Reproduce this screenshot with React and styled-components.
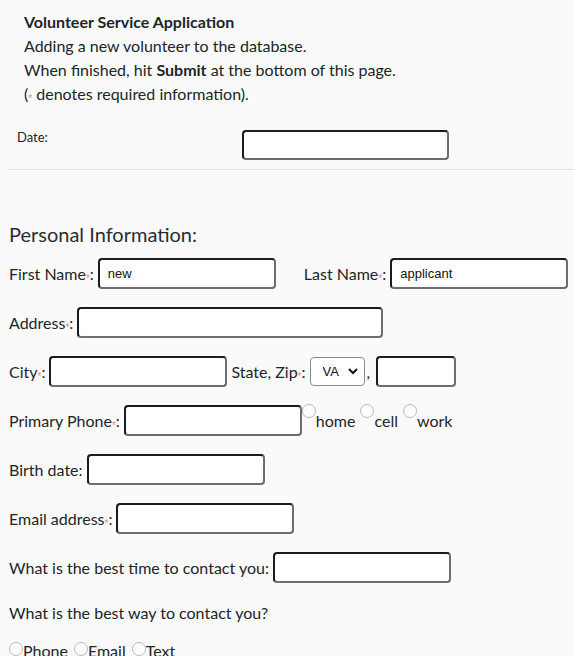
import React from "react";
import styled, { createGlobalStyle } from "styled-components";

const GlobalStyle = createGlobalStyle`
  body {
    margin: 0;
    background: #fafafa;
    font-family: Lato, "Segoe UI", "Liberation Sans", sans-serif;
    color: #212529;
  }
`;

const Page = styled.div`
  padding-left: 9px;
  height: 656px;
  overflow: hidden;
`;

const Intro = styled.div`
  margin-left: 15px;
  padding-top: 10px;
  font-size: 16px;
  line-height: 24px;
`;

const IntroTitle = styled.div`
  font-weight: 700;
`;

const DateRow = styled.div`
  display: grid;
  grid-template-columns: 225px 207px;
  align-items: start;
  margin: 24px 0 0 8px;
`;

const SmallLabel = styled.span`
  font-size: 13px;
  line-height: 14px;
`;

const Divider = styled.div`
  border-top: 1px solid #e2e2e2;
  margin-top: 9px;
`;

const SectionTitle = styled.h2`
  font-size: 20px;
  font-weight: 400;
  line-height: 28px;
  margin: 50px 0 10px;
  color: #2a2e33;
`;

const Form = styled.div`
  display: flex;
  flex-direction: column;
  gap: 18px;
`;

const Row = styled.div`
  display: flex;
  align-items: center;
  gap: 4px;
  height: 31px;
  font-size: 16px;
  line-height: 24px;
  white-space: nowrap;
`;

const Label = styled.span`
  margin-left: ${(p) => p.$ml || 0}px;
`;

const Req = styled.span`
  color: #e58a8a;
  font-family: "Liberation Sans", Arial, sans-serif;
  font-size: 10px;
  line-height: 0;
  vertical-align: -2px;
`;

const TextInput = styled.input`
  box-sizing: border-box;
  width: ${(p) => p.$w}px;
  height: ${(p) => p.$h || 31}px;
  border-style: solid;
  border-width: 2px;
  border-color: #1c1c1c #6e6e6e #6e6e6e #1c1c1c;
  border-radius: 4px;
  background: #fff;
  padding: 0 8px;
  font-family: "Segoe UI", "Liberation Sans", Arial, sans-serif;
  font-size: 13px;
  color: #111;
  outline: none;
`;

const SelectWrap = styled.span`
  position: relative;
  display: inline-flex;
`;

const Select = styled.select`
  appearance: none;
  box-sizing: border-box;
  width: 55px;
  height: 29px;
  border: 1px solid #8a8a8a;
  border-radius: 4px;
  background: #fff;
  padding: 0 0 0 12px;
  font-family: "Liberation Sans", Arial, sans-serif;
  font-size: 13px;
  color: #111;
`;

const Chevron = styled.svg`
  position: absolute;
  right: 7px;
  top: 11px;
  pointer-events: none;
`;

const Comma = styled.span`
  margin: 0 2px 0 -2px;
`;

const Options = styled.span`
  display: inline-flex;
  align-self: stretch;
  gap: 5px;
  margin-left: -4px;
`;

const Option = styled.span`
  display: inline-flex;
  align-items: ${(p) => (p.$top ? "flex-start" : "center")};
  line-height: ${(p) => (p.$top ? "31px" : "24px")};
`;

const Circle = styled.span`
  box-sizing: border-box;
  flex: none;
  width: 14px;
  height: 14px;
  border: 1px solid #b9b9b9;
  border-radius: 50%;
  background: #fff;
  margin-top: ${(p) => (p.$top ? "-1px" : "0")};
  margin-bottom: ${(p) => (p.$top ? "0" : "4px")};
`;

const Question = styled.div`
  font-size: 16px;
  line-height: 24px;
`;

const ContactWays = styled.div`
  display: flex;
  gap: 6px;
  margin-top: -4px;
  font-size: 16px;
  line-height: 24px;
`;

function Field({ children, required, ml }) {
  return (
    <Label $ml={ml}>
      {children}
      {required && <Req>*</Req>}:
    </Label>
  );
}

function Radio({ label, top }) {
  return (
    <Option $top={top}>
      <Circle $top={top} />
      {label}
    </Option>
  );
}

export default function App() {
  return (
    <Page>
      <GlobalStyle />
      <Intro>
        <IntroTitle>Volunteer Service Application</IntroTitle>
        <div>Adding a new volunteer to the database.</div>
        <div>
          When finished, hit <b>Submit</b> at the bottom of this page.
        </div>
        <div>
          (<Req>*</Req> denotes required information).
        </div>
      </Intro>

      <DateRow>
        <SmallLabel>Date:</SmallLabel>
        <TextInput $w={207} $h={30} />
      </DateRow>
      <Divider />

      <SectionTitle>Personal Information:</SectionTitle>
      <Form>
        <Row>
          <Field required>First Name</Field>
          <TextInput $w={178} defaultValue="new" />
          <Field required ml={24}>Last Name</Field>
          <TextInput $w={178} defaultValue="applicant" />
        </Row>
        <Row>
          <Field required>Address</Field>
          <TextInput $w={306} />
        </Row>
        <Row>
          <Field required>City</Field>
          <TextInput $w={178} />
          <Field required>State, Zip</Field>
          <SelectWrap>
            <Select defaultValue="VA">
              <option value="VA">VA</option>
            </Select>
            <Chevron width="10" height="7" viewBox="0 0 10 7">
              <path d="M1 1l4 4 4-4" fill="none" stroke="#111" strokeWidth="2" />
            </Chevron>
          </SelectWrap>
          <Comma>,</Comma>
          <TextInput $w={80} />
        </Row>
        <Row>
          <Field required>Primary Phone</Field>
          <TextInput $w={178} />
          <Options>
            <Radio label="home" top />
            <Radio label="cell" top />
            <Radio label="work" top />
          </Options>
        </Row>
        <Row>
          <Field>Birth date</Field>
          <TextInput $w={178} />
        </Row>
        <Row>
          <Field required>Email address</Field>
          <TextInput $w={178} />
        </Row>
        <Row>
          <Field>What is the best time to contact you</Field>
          <TextInput $w={178} />
        </Row>
        <Question>What is the best way to contact you?</Question>
        <ContactWays>
          <Radio label="Phone" />
          <Radio label="Email" />
          <Radio label="Text" />
        </ContactWays>
      </Form>
    </Page>
  );
}
